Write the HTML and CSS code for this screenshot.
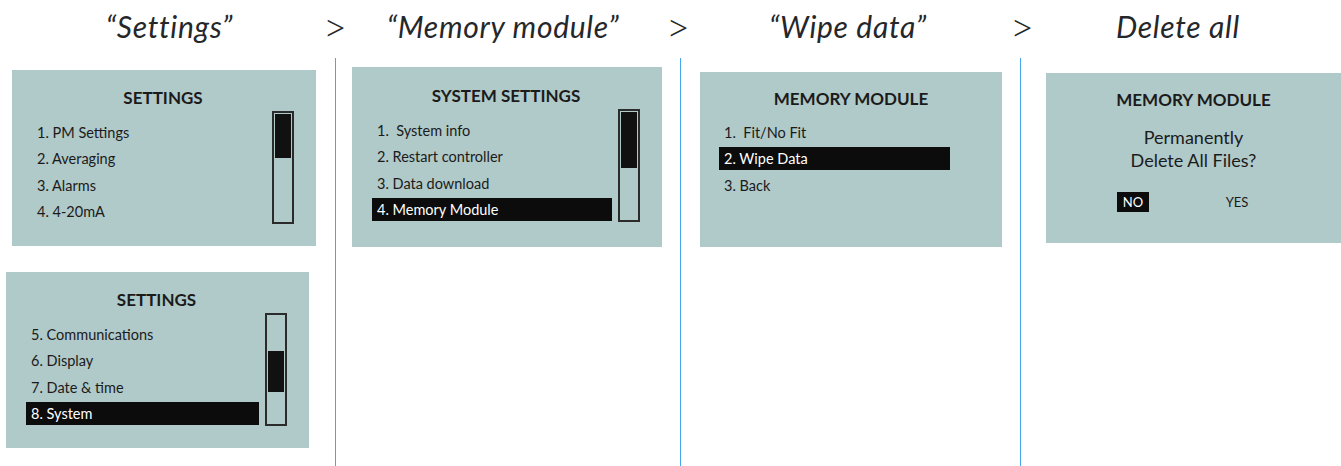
FILE: index.html
```html
<!DOCTYPE html>
<html lang="en">
<head>
  <meta charset="UTF-8">
  <meta name="viewport" content="width=device-width, initial-scale=1.0">
  <title>Wipe memory module</title>
  <link rel="stylesheet" href="styles.css">
</head>
<body>
  <header class="steps">
    <div class="step step-1">“Settings”</div>
    <div class="arrow">&gt;</div>
    <div class="step step-2">“Memory module”</div>
    <div class="arrow">&gt;</div>
    <div class="step step-3">“Wipe data”</div>
    <div class="arrow">&gt;</div>
    <div class="step step-4">Delete all</div>
  </header>

  <main class="flow">
    <section class="col col-1">
      <div class="screen screen-a">
        <div class="screen-title">SETTINGS</div>
        <div class="screen-body">
          <ul class="menu">
            <li>1. PM Settings</li>
            <li>2. Averaging</li>
            <li>3. Alarms</li>
            <li>4. 4-20mA</li>
          </ul>
          <div class="scrollbar"><div class="thumb thumb-top"></div></div>
        </div>
      </div>

      <div class="screen screen-b">
        <div class="screen-title">SETTINGS</div>
        <div class="screen-body">
          <ul class="menu">
            <li>5. Communications</li>
            <li>6. Display</li>
            <li>7. Date &amp; time</li>
            <li class="active">8. System</li>
          </ul>
          <div class="scrollbar"><div class="thumb thumb-mid"></div></div>
        </div>
      </div>
    </section>

    <section class="col col-2">
      <div class="screen screen-c">
        <div class="screen-title">SYSTEM SETTINGS</div>
        <div class="screen-body">
          <ul class="menu">
            <li>1.&nbsp; System info</li>
            <li>2. Restart controller</li>
            <li>3. Data download</li>
            <li class="active">4. Memory Module</li>
          </ul>
          <div class="scrollbar"><div class="thumb thumb-long"></div></div>
        </div>
      </div>
    </section>

    <section class="col col-3">
      <div class="screen screen-d">
        <div class="screen-title">MEMORY MODULE</div>
        <ul class="menu menu-short">
          <li>1.&nbsp; Fit/No Fit</li>
          <li class="active">2. Wipe Data</li>
          <li>3. Back</li>
        </ul>
      </div>
    </section>

    <section class="col col-4">
      <div class="screen screen-e">
        <div class="screen-title">MEMORY MODULE</div>
        <p class="confirm-text">Permanently<br>Delete All Files?</p>
        <div class="choices">
          <span class="choice selected">NO</span>
          <span class="choice">YES</span>
        </div>
      </div>
    </section>
  </main>
</body>
</html>
```

FILE: styles.css
```css
body {
  margin: 0;
  font-family: Lato, "Liberation Sans", sans-serif;
  background-color: #fff;
  color: #222;
}

/* step captions */
.steps {
  display: grid;
  grid-template-columns: 320px 30px 313px 30px 314px 30px 1fr;
  height: 58px;
  box-sizing: border-box;
  padding-top: 8px;
}
.step {
  font-style: italic;
  font-weight: 400;
  font-size: 30px;
  letter-spacing: 0.7px;
  line-height: 36px;
  text-align: center;
  color: #25272a;
  white-space: nowrap;
}
.step-1 { padding-left: 19px; }
.step-2 { padding-right: 7px; }
.step-3 { padding-right: 4px; }
.step-4 { padding-right: 22px; }
.arrow {
  font-weight: 300;
  font-size: 42px;
  line-height: 36px;
  text-align: center;
  color: #25272a;
}

/* columns */
.flow {
  display: grid;
  grid-template-columns: 335px 345px 340px 1fr;
  height: 408px;
}
.col + .col {
  border-left: 1px solid #45a8ee;
}
.col-1 { padding-top: 12px; }
.col-2 { padding-top: 9px; }
.col-3 { padding-top: 14px; }
.col-4 { padding-top: 15px; }

/* device screens */
.screen {
  background-color: #b0c9c9;
  box-sizing: border-box;
  padding: 18px 22px 0 20px;
  color: #1b1b1b;
}
.screen-a { margin-left: 12px; width: 304px; height: 176px; }
.screen-b { margin: 26px 0 0 6px; width: 303px; height: 176px; }
.screen-c { margin-left: 16px; width: 310px; height: 180px; padding-top: 19px; }
.screen-d { margin-left: 19px; width: 302px; height: 175px; padding: 17px 0 0 19px; }
.screen-e { margin-left: 25px; height: 170px; padding: 17px 0 0; }

.screen-title {
  font-size: 17px;
  font-weight: 700;
  line-height: 20px;
  text-align: center;
}
.screen-d .screen-title { margin-left: -19px; }

.screen-body {
  display: flex;
  gap: 6px;
  margin-top: 3px;
}

.menu {
  flex: 1;
  list-style: none;
  margin: 9.5px 0 0;
  padding: 0;
  display: flex;
  flex-direction: column;
  gap: 3.6px;
}
.menu li {
  height: 23px;
  line-height: 23px;
  padding-left: 5px;
  font-size: 14.5px;
}
.menu li.active {
  background-color: #0c0c0c;
  color: #fff;
}
.menu-short {
  width: 231px;
  margin-top: 11.5px;
}

.scrollbar {
  width: 22px;
  height: 113px;
  box-sizing: border-box;
  border: 2px solid #2b2b2b;
  padding: 1px;
}
.thumb {
  background-color: #111;
}
.thumb-top { height: 44px; }
.thumb-mid { height: 41px; margin-top: 35px; }
.thumb-long { height: 56px; }

/* confirm dialog */
.confirm-text {
  margin: 15.5px 0 0;
  font-size: 18px;
  line-height: 23px;
  text-align: center;
}
.choices {
  display: flex;
  gap: 72px;
  margin-top: 20.5px;
  padding-left: 71px;
}
.choice {
  width: 32px;
  height: 20px;
  line-height: 20px;
  font-size: 13px;
  text-align: center;
}
.choice.selected {
  background-color: #0c0c0c;
  color: #fff;
}
```
